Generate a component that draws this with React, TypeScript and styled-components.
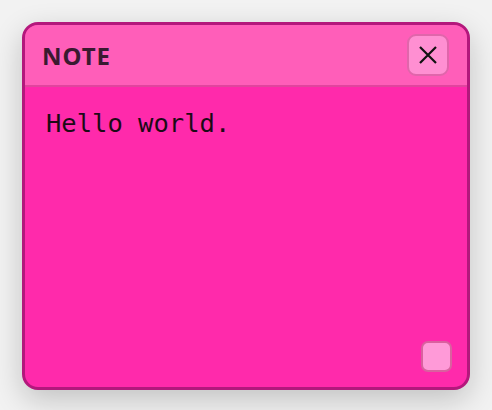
import React from "react";
import styled, { createGlobalStyle } from "styled-components";

const Global = createGlobalStyle`
  html, body { margin: 0; padding: 0; }
  body {
    background: #f2f2f2;
    width: 492px;
    height: 410px;
    overflow: hidden;
  }
`;

const Page = styled.div`
  box-sizing: border-box;
  width: 492px;
  height: 410px;
  padding: 22px 22px 20px 22px;
  display: flex;
`;

const Card = styled.div`
  box-sizing: border-box;
  width: 448px;
  height: 368px;
  border: 3px solid #b3187c;
  border-radius: 16px;
  background: #ff2aab;
  box-shadow: 0 10px 30px rgba(0, 0, 0, 0.2);
  display: flex;
  flex-direction: column;
  overflow: hidden;
`;

const Header = styled.div`
  box-sizing: border-box;
  height: 62px;
  flex: none;
  display: flex;
  align-items: center;
  justify-content: space-between;
  padding: 0 18px 0 17px;
  background: #ff5eb9;
  border-bottom: 2px solid #e1459e;
`;

const Title = styled.div`
  font-family: "Noto Sans", "DejaVu Sans", sans-serif;
  font-weight: 700;
  font-size: 24px;
  letter-spacing: 1px;
  color: #3a1a30;
`;

const CloseButton = styled.button`
  box-sizing: border-box;
  width: 42px;
  height: 42px;
  border: 2px solid #e066ab;
  border-radius: 9px;
  background: #ff8fd2;
  display: flex;
  align-items: center;
  justify-content: center;
  padding: 0;
  cursor: pointer;
`;

const Body = styled.div`
  flex: 1;
  display: flex;
  flex-direction: column;
  justify-content: space-between;
  padding: 20px 15px 15px 21px;
`;

const Text = styled.div`
  font-family: "DejaVu Sans Mono", monospace;
  font-size: 25.5px;
  line-height: 32px;
  color: #1c0a16;
`;

const ResizeHandle = styled.div`
  box-sizing: border-box;
  align-self: flex-end;
  width: 31px;
  height: 31px;
  border: 2px solid #d9619f;
  border-radius: 7px;
  background: #ff9ad8;
`;

export default function App() {
  return (
    <>
      <Global />
      <Page>
        <Card>
          <Header>
            <Title>NOTE</Title>
            <CloseButton aria-label="Close">
              <svg width="20" height="20" viewBox="0 0 20 20">
                <path d="M2 2 L18 18 M18 2 L2 18" stroke="#111" strokeWidth="2.2" fill="none" />
              </svg>
            </CloseButton>
          </Header>
          <Body>
            <Text>Hello world.</Text>
            <ResizeHandle />
          </Body>
        </Card>
      </Page>
    </>
  );
}
